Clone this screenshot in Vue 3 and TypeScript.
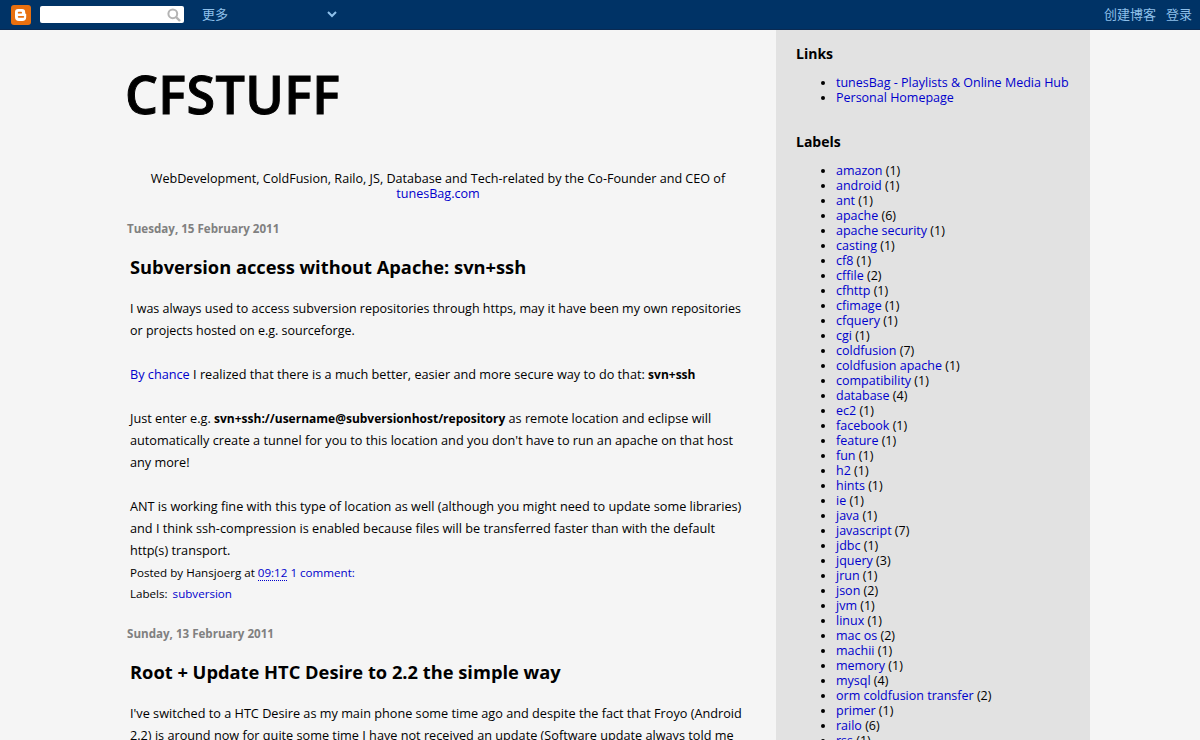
<script setup lang="ts">
interface Label { name: string; count: number }
const labels: Label[] = [
  { name: 'amazon', count: 1 }, { name: 'android', count: 1 }, { name: 'ant', count: 1 },
  { name: 'apache', count: 6 }, { name: 'apache security', count: 1 }, { name: 'casting', count: 1 },
  { name: 'cf8', count: 1 }, { name: 'cffile', count: 2 }, { name: 'cfhttp', count: 1 },
  { name: 'cfimage', count: 1 }, { name: 'cfquery', count: 1 }, { name: 'cgi', count: 1 },
  { name: 'coldfusion', count: 7 }, { name: 'coldfusion apache', count: 1 }, { name: 'compatibility', count: 1 },
  { name: 'database', count: 4 }, { name: 'ec2', count: 1 }, { name: 'facebook', count: 1 },
  { name: 'feature', count: 1 }, { name: 'fun', count: 1 }, { name: 'h2', count: 1 },
  { name: 'hints', count: 1 }, { name: 'ie', count: 1 }, { name: 'java', count: 1 },
  { name: 'javascript', count: 7 }, { name: 'jdbc', count: 1 }, { name: 'jquery', count: 3 },
  { name: 'jrun', count: 1 }, { name: 'json', count: 2 }, { name: 'jvm', count: 1 },
  { name: 'linux', count: 1 }, { name: 'mac os', count: 2 }, { name: 'machii', count: 1 },
  { name: 'memory', count: 1 }, { name: 'mysql', count: 4 }, { name: 'orm coldfusion transfer', count: 2 },
  { name: 'primer', count: 1 }, { name: 'railo', count: 6 }, { name: 'rss', count: 1 },
]
</script>

<template>
  <div class="page">
    <header class="navbar">
      <div class="nav-left">
        <svg class="logo" width="20" height="20" viewBox="0 0 20 20">
          <rect width="20" height="20" rx="3" fill="#e8700f" />
          <path d="M7 4h4a3.2 3.2 0 0 1 3.2 3.2v.8c0 .5.4.9 1 1v3a4 4 0 0 1-4 4H8a4 4 0 0 1-4-4V7A3 3 0 0 1 7 4z" fill="#fff" />
          <rect x="6.8" y="6.8" width="4.2" height="1.7" rx=".85" fill="#e8700f" />
          <rect x="6.8" y="11" width="6.4" height="1.7" rx=".85" fill="#e8700f" />
        </svg>
        <div class="search">
          <svg width="14" height="14" viewBox="0 0 14 14" fill="none" stroke="#b4b4b4">
            <circle cx="5.8" cy="5.8" r="4.4" stroke-width="2" />
            <path d="M9 9l4 4" stroke-width="2.4" />
          </svg>
        </div>
        <div class="more">
          <span>更多</span>
          <svg width="10" height="7" viewBox="0 0 10 7" fill="none" stroke="#8ec0ea" stroke-width="2">
            <path d="M1 1l4 4 4-4" />
          </svg>
        </div>
      </div>
      <div class="nav-right">
        <span>创建博客</span>
        <span>登录</span>
      </div>
    </header>

    <div class="content">
      <main class="main">
        <h1 class="title">CFSTUFF</h1>
        <p class="tagline">
          WebDevelopment, ColdFusion, Railo, JS, Database and Tech-related by the Co-Founder and CEO of
          <a>tunesBag.com</a>
        </p>

        <h2 class="date">Tuesday, 15 February 2011</h2>
        <article class="post">
          <h3 class="post-title">Subversion access without Apache: svn+ssh</h3>
          <div class="body">
            <span class="tight">I was always used to access subversion repositories through https, may it have been my own repositories or projects hosted on e.g. sourceforge.</span><br /><br />
            <a>By chance</a> I realized that there is a much better, easier and more secure way to do that: <b>svn+ssh</b><br /><br />
            Just enter e.g. <b>svn+ssh://username@subversionhost/repository</b> as remote location and eclipse will automatically create a tunnel for you to this location and you don't have to run an apache on that host any more!<br /><br />
            ANT is working fine with this type of location as well (although you might need to update some libraries) and I think ssh-compression is enabled because files will be transferred faster than with the default http(s) transport.
          </div>
          <div class="footer">
            <div>Posted by Hansjoerg at <a class="time">09:12</a> <a>1 comment:</a></div>
            <div class="labels-line">Labels: <a>subversion</a></div>
          </div>
        </article>

        <h2 class="date second">Sunday, 13 February 2011</h2>
        <article class="post">
          <h3 class="post-title">Root + Update HTC Desire to 2.2 the simple way</h3>
          <div class="body">
            I've switched to a HTC Desire as my main phone some time ago and despite the fact that Froyo (Android 2.2) is around now for quite some time I have not received an update (Software update always told me
          </div>
        </article>
      </main>

      <aside class="sidebar">
        <section class="widget">
          <h2>Links</h2>
          <ul>
            <li><a>tunesBag - Playlists &amp; Online Media Hub</a></li>
            <li><a>Personal Homepage</a></li>
          </ul>
        </section>
        <section class="widget">
          <h2>Labels</h2>
          <ul>
            <li v-for="l in labels" :key="l.name"><a>{{ l.name }}</a> ({{ l.count }})</li>
          </ul>
        </section>
      </aside>
    </div>
  </div>
</template>

<style>
html, body { margin: 0; height: 740px; overflow: hidden; background: #f5f5f5; }
</style>

<style scoped>
.page {
  height: 740px;
  overflow: hidden;
  font-family: "Open Sans", "Noto Sans", sans-serif;
  font-size: 12.5px;
  color: #000;
}
a { color: #0000cc; }
.navbar {
  height: 30px;
  background: #003366;
  border-bottom: 1px solid #0a2a52;
  box-sizing: border-box;
  display: flex;
  align-items: center;
  justify-content: space-between;
  padding: 0 8px 0 11px;
  font-family: "Noto Sans CJK SC", sans-serif;
  font-size: 13px;
  color: #8ec0ea;
}
.nav-left { display: flex; align-items: center; }
.logo { flex: none; }
.search {
  width: 144px;
  height: 17px;
  margin-left: 9px;
  background: #fff;
  border-radius: 2px;
  display: flex;
  align-items: center;
  justify-content: flex-end;
  padding-right: 3px;
  box-sizing: border-box;
}
.more { display: flex; align-items: center; width: 135px; margin-left: 18px; justify-content: space-between; }
.more span, .nav-right span { margin-bottom: 2px; }
.nav-right { display: flex; gap: 10px; }
.content { display: flex; height: 710px; }
.main { width: 616px; margin-left: 127px; flex: none; }
.title { font-size: 52px; font-weight: 600; line-height: 62px; margin: 33px 0 0 -2px; letter-spacing: 0.4px; -webkit-text-stroke: 1px #000; }
.tagline { margin: 46px 0 0; width: 622px; text-align: center; line-height: 15px; font-size: 12.6px; }
.date { font-size: 11.6px; font-weight: 700; color: #808080; margin: 20px 0 0; line-height: 15px; }
.date.second { margin-top: 22px; }
.post { margin-left: 3px; width: 616px; }
.post-title { font-size: 18.3px; font-weight: 700; line-height: 24px; margin: 19px 0 0; }
.body { line-height: 22px; margin-top: 18px; font-size: 12.7px; }
.body b { font-size: 12px; line-height: 1; }
.tight { font-size: 12.5px; line-height: 1; }
.footer { line-height: 21px; font-size: 11.6px; margin-top: 1px; }
.labels-line { word-spacing: 2px; }
.time { border-bottom: 1px dotted #0000cc; }
.sidebar {
  width: 314px;
  margin-left: 33px;
  background: #e2e2e2;
  padding: 15px 20px;
  box-sizing: border-box;
  flex: none;
}
.widget { margin-bottom: 28px; }
.widget h2 { font-size: 14px; font-weight: 700; margin: 0 0 13px; line-height: 17px; }
.widget ul { margin: 0; padding-left: 40px; line-height: 15px; }
</style>
